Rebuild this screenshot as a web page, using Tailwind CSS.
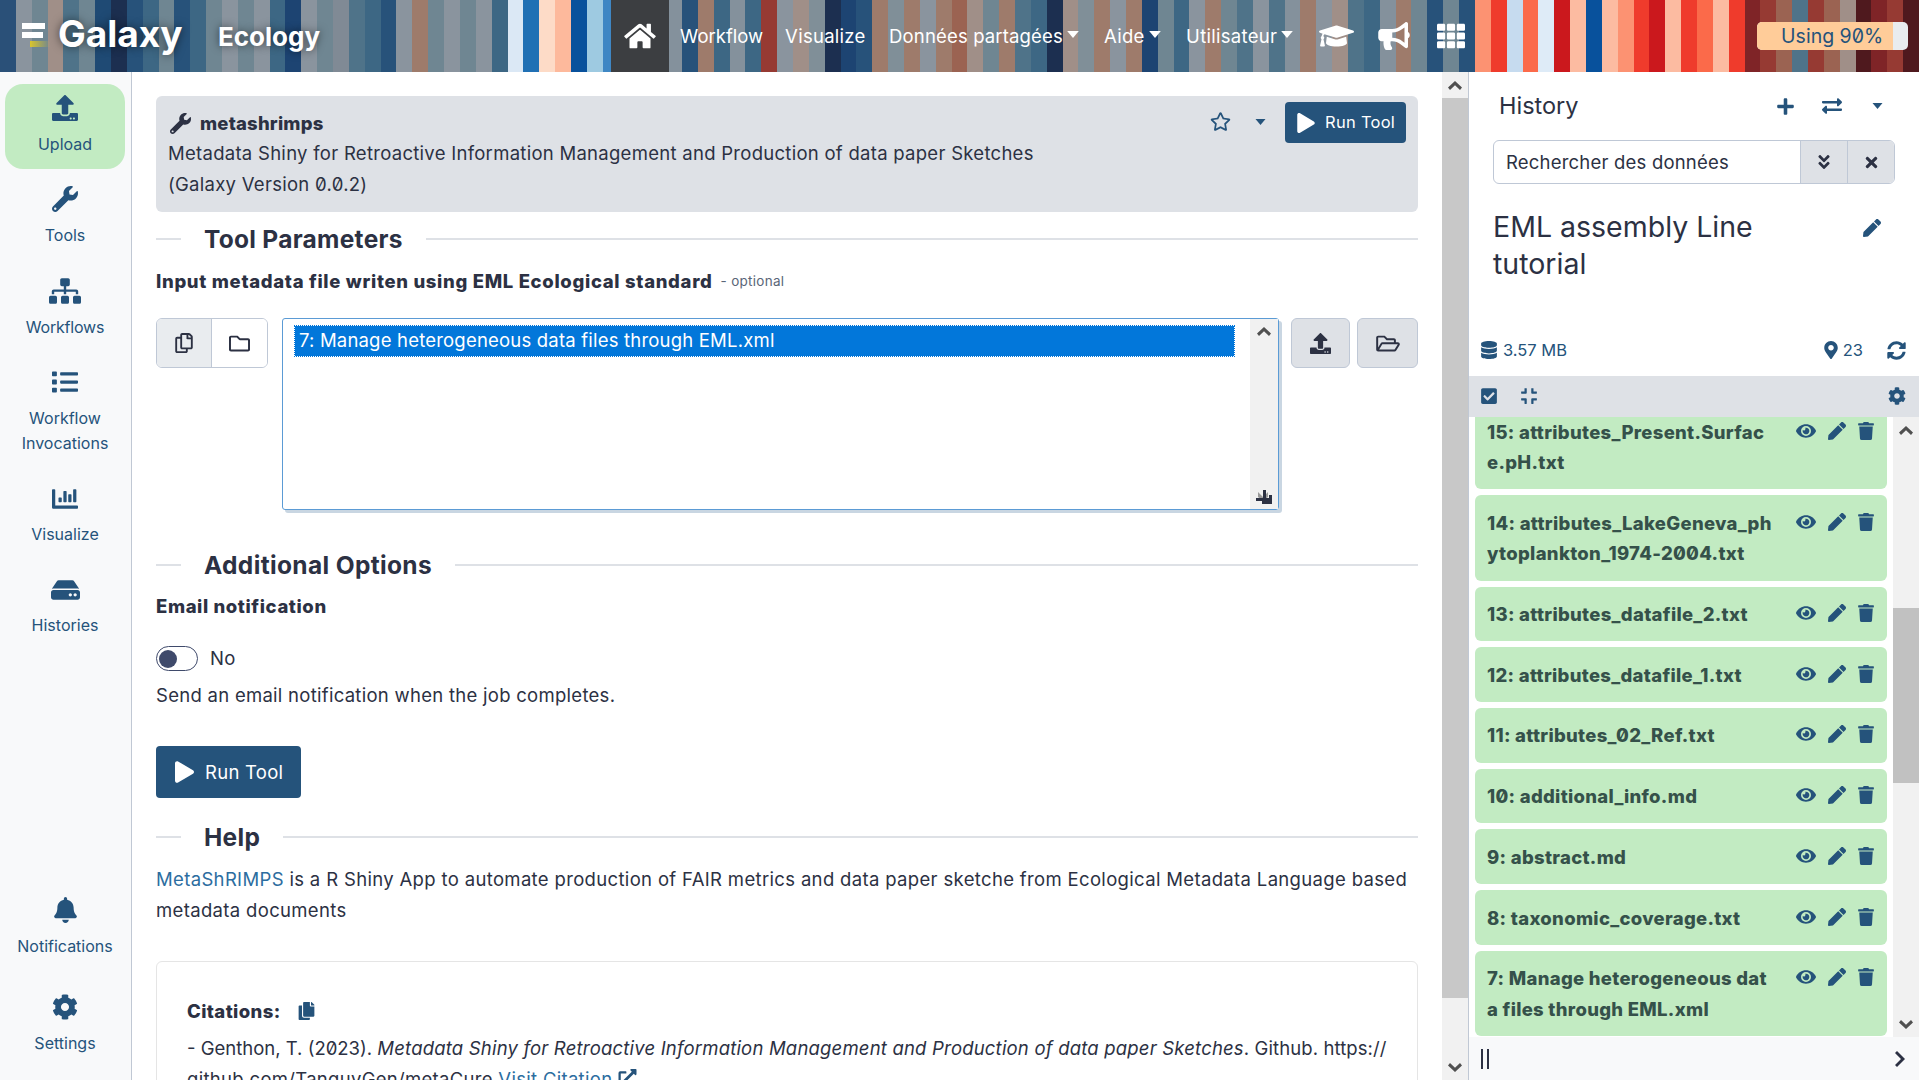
<!DOCTYPE html>
<html lang="fr">
<head>
  <meta charset="UTF-8" />
  <title>Galaxy Ecology</title>
  <script src="https://cdn.jsdelivr.net/npm/@tailwindcss/browser@4"></script>
</head>
<body class="overflow-hidden bg-white text-[#2c3143] font-[family-name:Inter,sans-serif] slashed-zero text-[18.5px] tracking-[.28px] leading-[30.6px]">

  <!-- icon sprites -->
  <svg class="hidden" xmlns="http://www.w3.org/2000/svg">
    <symbol id="i-upload" viewBox="0 0 512 512"><path d="M296 384h-80c-13.3 0-24-10.7-24-24V192h-87.7c-17.8 0-26.7-21.5-14.1-34.1L242.3 5.7c7.5-7.5 19.8-7.5 27.3 0l152.2 152.2c12.6 12.6 3.7 34.1-14.1 34.1H320v168c0 13.3-10.7 24-24 24zm216-8v112c0 13.3-10.7 24-24 24H24c-13.3 0-24-10.7-24-24V376c0-13.3 10.7-24 24-24h136v8c0 30.9 25.1 56 56 56h80c30.9 0 56-25.1 56-56v-8h136c13.3 0 24 10.7 24 24zm-124 88c0-11-9-20-20-20s-20 9-20 20 9 20 20 20 20-9 20-20zm64 0c0-11-9-20-20-20s-20 9-20 20 9 20 20 20 20-9 20-20z"/></symbol>
    <symbol id="i-wrench" viewBox="0 0 512 512"><path d="M507.73 109.1c-2.24-9.03-13.54-12.09-20.12-5.51l-74.36 74.36-67.88-11.31-11.31-67.88 74.36-74.36c6.62-6.62 3.43-17.9-5.66-20.16-47.38-11.74-99.55.91-136.58 37.93-39.64 39.64-50.55 97.1-34.05 147.2L18.74 402.76c-24.99 24.99-24.99 65.51 0 90.5 24.99 24.99 65.51 24.99 90.5 0l213.21-213.21c50.12 16.71 107.47 5.68 147.37-34.22 37.07-37.07 49.7-89.32 37.91-136.73zM64 472c-13.25 0-24-10.75-24-24 0-13.26 10.75-24 24-24s24 10.74 24 24c0 13.25-10.75 24-24 24z"/></symbol>
    <symbol id="i-sitemap" viewBox="0 0 640 512"><path d="M128 352H32c-17.67 0-32 14.33-32 32v96c0 17.67 14.33 32 32 32h96c17.67 0 32-14.33 32-32v-96c0-17.67-14.33-32-32-32zm-24-80h192v48h48v-48h192v48h48v-57.59c0-21.17-17.23-38.41-38.41-38.41H344v-64h40c17.67 0 32-14.33 32-32V32c0-17.67-14.33-32-32-32H256c-17.67 0-32 14.33-32 32v96c0 17.67 14.33 32 32 32h40v64H94.41C73.23 224 56 241.23 56 262.41V320h48v-48zm264 80h-96c-17.67 0-32 14.33-32 32v96c0 17.67 14.33 32 32 32h96c17.67 0 32-14.33 32-32v-96c0-17.67-14.33-32-32-32zm240 0h-96c-17.67 0-32 14.33-32 32v96c0 17.67 14.33 32 32 32h96c17.67 0 32-14.33 32-32v-96c0-17.67-14.33-32-32-32z"/></symbol>
    <symbol id="i-list" viewBox="0 0 512 512"><path d="M80 368H16a16 16 0 0 0-16 16v64a16 16 0 0 0 16 16h64a16 16 0 0 0 16-16v-64a16 16 0 0 0-16-16zm0-320H16A16 16 0 0 0 0 64v64a16 16 0 0 0 16 16h64a16 16 0 0 0 16-16V64a16 16 0 0 0-16-16zm0 160H16a16 16 0 0 0-16 16v64a16 16 0 0 0 16 16h64a16 16 0 0 0 16-16v-64a16 16 0 0 0-16-16zm416 176H176a16 16 0 0 0-16 16v32a16 16 0 0 0 16 16h320a16 16 0 0 0 16-16v-32a16 16 0 0 0-16-16zm0-320H176a16 16 0 0 0-16 16v32a16 16 0 0 0 16 16h320a16 16 0 0 0 16-16V80a16 16 0 0 0-16-16zm0 160H176a16 16 0 0 0-16 16v32a16 16 0 0 0 16 16h320a16 16 0 0 0 16-16v-32a16 16 0 0 0-16-16z"/></symbol>
    <symbol id="i-chart" viewBox="0 0 512 512"><path d="M332.8 320h38.4c6.4 0 12.8-6.4 12.8-12.8V172.8c0-6.4-6.4-12.8-12.8-12.8h-38.4c-6.4 0-12.8 6.4-12.8 12.8v134.4c0 6.4 6.4 12.8 12.8 12.8zm96 0h38.4c6.4 0 12.8-6.4 12.8-12.8V76.8c0-6.4-6.4-12.8-12.8-12.8h-38.4c-6.4 0-12.8 6.4-12.8 12.8v230.4c0 6.4 6.4 12.8 12.8 12.8zm-288 0h38.4c6.4 0 12.8-6.4 12.8-12.8v-70.4c0-6.4-6.4-12.8-12.8-12.8h-38.4c-6.4 0-12.8 6.4-12.8 12.8v70.4c0 6.4 6.4 12.8 12.8 12.8zm96 0h38.4c6.4 0 12.8-6.4 12.8-12.8V108.8c0-6.4-6.4-12.8-12.8-12.8h-38.4c-6.4 0-12.8 6.4-12.8 12.8v198.4c0 6.4 6.4 12.8 12.8 12.8zM496 384H64V80c0-8.84-7.16-16-16-16H16C7.16 64 0 71.16 0 80v336c0 17.67 14.33 32 32 32h464c8.84 0 16-7.16 16-16v-32c0-8.84-7.16-16-16-16z"/></symbol>
    <symbol id="i-hdd" viewBox="0 0 576 512"><path d="M576 304v96c0 26.51-21.49 48-48 48H48c-26.51 0-48-21.49-48-48v-96c0-26.51 21.49-48 48-48h480c26.51 0 48 21.49 48 48zm-48-80a79.557 79.557 0 0 1 30.777 6.165L462.25 85.374A48.003 48.003 0 0 0 422.311 64H153.689a48 48 0 0 0-39.938 21.374L17.223 230.165A79.557 79.557 0 0 1 48 224h480zm-48 96c-17.673 0-32 14.327-32 32s14.327 32 32 32 32-14.327 32-32-14.327-32-32-32zm-96 0c-17.673 0-32 14.327-32 32s14.327 32 32 32 32-14.327 32-32-14.327-32-32-32z"/></symbol>
    <symbol id="i-bell" viewBox="0 0 448 512"><path d="M224 512c35.32 0 63.97-28.65 63.97-64H160.03c0 35.35 28.65 64 63.97 64zm215.39-149.71c-19.32-20.76-55.47-51.99-55.47-154.29 0-77.7-54.48-139.9-127.94-155.16V32c0-17.67-14.32-32-31.98-32s-31.98 14.33-31.98 32v20.84C118.56 68.1 64.08 130.3 64.08 208c0 102.3-36.15 133.53-55.47 154.29-6 6.45-8.66 14.16-8.61 21.71.11 16.4 12.98 32 32.1 32h383.8c19.12 0 32-15.6 32.1-32 .05-7.55-2.61-15.27-8.61-21.71z"/></symbol>
    <symbol id="i-cog" viewBox="0 0 512 512"><path d="M487.4 315.7l-42.6-24.6c4.3-23.2 4.3-47 0-70.2l42.6-24.6c4.9-2.8 7.1-8.6 5.5-14-11.1-35.6-30-67.8-54.7-94.6-3.8-4.1-10-5.1-14.8-2.3L380.8 110c-17.9-15.4-38.5-27.3-60.8-35.1V25.8c0-5.6-3.9-10.5-9.4-11.7-36.7-8.2-74.3-7.8-109.2 0-5.5 1.2-9.4 6.1-9.4 11.7V75c-22.2 7.9-42.8 19.8-60.8 35.1L88.7 85.5c-4.9-2.8-11-1.9-14.8 2.3-24.7 26.7-43.6 58.9-54.7 94.6-1.7 5.4.6 11.2 5.5 14L67.3 221c-4.3 23.2-4.3 47 0 70.2l-42.6 24.6c-4.9 2.8-7.1 8.6-5.5 14 11.1 35.6 30 67.8 54.7 94.6 3.8 4.1 10 5.1 14.8 2.3l42.6-24.6c17.9 15.4 38.5 27.3 60.8 35.1v49.2c0 5.6 3.9 10.5 9.4 11.7 36.7 8.2 74.3 7.8 109.2 0 5.5-1.2 9.4-6.1 9.4-11.7v-49.2c22.2-7.9 42.8-19.8 60.8-35.1l42.6 24.6c4.9 2.8 11 1.9 14.8-2.3 24.7-26.7 43.6-58.9 54.7-94.6 1.5-5.5-.7-11.3-5.6-14.1zM256 336c-44.1 0-80-35.9-80-80s35.9-80 80-80 80 35.9 80 80-35.9 80-80 80z"/></symbol>
    <symbol id="i-home" viewBox="0 0 576 512"><path d="M280.37 148.26L96 300.11V464a16 16 0 0 0 16 16l112.06-.29a16 16 0 0 0 15.92-16V368a16 16 0 0 1 16-16h64a16 16 0 0 1 16 16v95.64a16 16 0 0 0 16 16.05L464 480a16 16 0 0 0 16-16V300L295.67 148.26a12.19 12.19 0 0 0-15.3 0zM571.6 251.47L488 182.56V44.05a12 12 0 0 0-12-12h-56a12 12 0 0 0-12 12v72.61L318.47 43a48 48 0 0 0-61 0L4.34 251.47a12 12 0 0 0-1.6 16.9l25.5 31A12 12 0 0 0 45.15 301l235.22-193.74a12.19 12.19 0 0 1 15.3 0L530.9 301a12 12 0 0 0 16.9-1.6l25.5-31a12 12 0 0 0-1.7-16.93z"/></symbol>
    <symbol id="i-cap" viewBox="0 0 640 512"><path d="M622.34 153.2L343.4 67.5c-15.2-4.67-31.6-4.67-46.79 0L17.66 153.2c-23.54 7.23-23.54 38.36 0 45.59l48.63 14.94c-10.67 13.19-17.23 29.28-17.88 46.9C38.78 266.15 32 276.11 32 288c0 10.78 5.68 19.85 13.86 25.65L20.33 428.53C18.11 438.52 25.71 448 35.94 448h56.11c10.24 0 17.84-9.48 15.62-19.47L82.14 313.65C90.32 307.85 96 298.78 96 288c0-11.57-6.47-21.25-15.66-26.87.76-15.02 8.44-28.3 20.69-36.72L296.6 284.5c9.06 2.78 26.44 6.25 46.79 0l278.95-85.7c23.55-7.24 23.55-38.36 0-45.6zM352.79 315.09c-28.53 8.76-52.84 3.92-65.59 0l-145.02-44.55L128 384c0 35.35 85.96 64 192 64s192-28.65 192-64l-14.18-113.47-145.03 44.56z"/></symbol>
    <symbol id="i-bullhorn" viewBox="0 0 576 512"><path d="M576 240c0-23.63-12.95-44.04-32-55.12V32.01C544 23.26 537.02 0 512 0c-7.12 0-14.19 2.38-19.98 7.02l-85.03 68.03C364.28 109.19 310.66 128 256 128H64c-35.35 0-64 28.65-64 64v96c0 35.35 28.65 64 64 64h33.7c-1.39 10.48-2.18 21.14-2.18 32 0 39.77 9.26 77.35 25.56 110.94 5.19 10.69 16.52 17.06 28.4 17.06h74.28c26.05 0 41.69-29.84 25.9-50.56-16.4-21.52-26.15-48.36-26.15-77.44 0-11.11 1.62-21.79 4.41-32H256c54.66 0 108.28 18.81 150.98 52.95l85.03 68.03a32.023 32.023 0 0 0 19.98 7.02c24.92 0 32-22.78 32-32V295.13C563.05 284.04 576 263.63 576 240zm-96 141.42l-33.05-26.44C392.95 311.78 325.12 288 256 288v-96c69.12 0 136.95-23.78 190.95-66.98L480 98.58v282.84z"/></symbol>
    <symbol id="i-th" viewBox="0 0 512 512"><path d="M149.333 56v80c0 13.255-10.745 24-24 24H24c-13.255 0-24-10.745-24-24V56c0-13.255 10.745-24 24-24h101.333c13.255 0 24 10.745 24 24zm181.334 240v-80c0-13.255-10.745-24-24-24H205.333c-13.255 0-24 10.745-24 24v80c0 13.255 10.745 24 24 24h101.333c13.256 0 24.001-10.745 24.001-24zm32-240v80c0 13.255 10.745 24 24 24H488c13.255 0 24-10.745 24-24V56c0-13.255-10.745-24-24-24H386.667c-13.255 0-24 10.745-24 24zm-32 80V56c0-13.255-10.745-24-24-24H205.333c-13.255 0-24 10.745-24 24v80c0 13.255 10.745 24 24 24h101.333c13.256 0 24.001-10.745 24.001-24zm-205.334 56H24c-13.255 0-24 10.745-24 24v80c0 13.255 10.745 24 24 24h101.333c13.255 0 24-10.745 24-24v-80c0-13.255-10.745-24-24-24zM0 376v80c0 13.255 10.745 24 24 24h101.333c13.255 0 24-10.745 24-24v-80c0-13.255-10.745-24-24-24H24c-13.255 0-24 10.745-24 24zm386.667-56H488c13.255 0 24-10.745 24-24v-80c0-13.255-10.745-24-24-24H386.667c-13.255 0-24 10.745-24 24v80c0 13.255 10.745 24 24 24zm0 160H488c13.255 0 24-10.745 24-24v-80c0-13.255-10.745-24-24-24H386.667c-13.255 0-24 10.745-24 24v80c0 13.255 10.745 24 24 24zM181.333 376v80c0 13.255 10.745 24 24 24h101.333c13.255 0 24-10.745 24-24v-80c0-13.255-10.745-24-24-24H205.333c-13.255 0-24 10.745-24 24z"/></symbol>
    <symbol id="i-star" viewBox="0 0 576 512"><path d="M528.1 171.5L382 150.2 316.7 17.8c-11.7-23.6-45.6-23.9-57.4 0L194 150.2 47.9 171.5c-26.2 3.8-36.7 36.1-17.7 54.6l105.7 103-25 145.5c-4.5 26.3 23.2 46 46.4 33.7L288 439.6l130.7 68.7c23.2 12.2 50.9-7.4 46.4-33.7l-25-145.5 105.7-103c19-18.5 8.5-50.8-17.7-54.6zM388.6 312.3l23.7 138.4L288 385.4l-124.3 65.3 23.7-138.4-100.6-98 139-20.2 62.2-126 62.2 126 139 20.2-100.6 98z"/></symbol>
    <symbol id="i-play" viewBox="0 0 448 512"><path d="M424.4 214.7L72.4 6.6C43.8-10.3 0 6.1 0 47.9V464c0 37.5 40.7 60.1 72.4 41.3l352-208c31.4-18.5 31.5-64.1 0-82.6z"/></symbol>
    <symbol id="i-plus" viewBox="0 0 448 512"><path d="M416 208H272V64c0-17.67-14.33-32-32-32h-32c-17.67 0-32 14.33-32 32v144H32c-17.67 0-32 14.33-32 32v32c0 17.67 14.33 32 32 32h144v144c0 17.67 14.33 32 32 32h32c17.67 0 32-14.33 32-32V304h144c17.67 0 32-14.33 32-32v-32c0-17.67-14.33-32-32-32z"/></symbol>
    <symbol id="i-exchange" viewBox="0 0 512 512"><path d="M0 168v-16c0-13.255 10.745-24 24-24h360V80c0-21.367 25.899-32.042 40.971-16.971l80 80c9.372 9.373 9.372 24.569 0 33.941l-80 80C409.956 271.982 384 261.456 384 240v-48H24c-13.255 0-24-10.745-24-24zm488 152H128v-48c0-21.314-25.862-32.08-40.971-16.971l-80 80c-9.372 9.373-9.372 24.569 0 33.941l80 80C102.057 463.997 128 453.437 128 432v-48h360c13.255 0 24-10.745 24-24v-16c0-13.255-10.745-24-24-24z"/></symbol>
    <symbol id="i-dbl-down" viewBox="0 0 320 512"><path d="M143 256.3L7 120.3c-9.4-9.4-9.4-24.6 0-33.9l22.6-22.6c9.4-9.4 24.6-9.4 33.9 0l96.4 96.4 96.4-96.4c9.4-9.4 24.6-9.4 33.9 0L313 86.3c9.4 9.4 9.4 24.6 0 33.9l-136 136c-9.4 9.5-24.6 9.5-34 .1zm34 192l136-136c9.4-9.4 9.4-24.6 0-33.9l-22.6-22.6c-9.4-9.4-24.6-9.4-33.9 0L160 352.1l-96.4-96.4c-9.4-9.4-24.6-9.4-33.9 0L7 278.3c-9.4 9.4-9.4 24.6 0 33.9l136 136c9.4 9.5 24.6 9.5 34 .1z"/></symbol>
    <symbol id="i-times" viewBox="0 0 352 512"><path d="M242.72 256l100.07-100.07c12.28-12.28 12.28-32.19 0-44.48l-22.24-22.24c-12.28-12.28-32.19-12.28-44.48 0L176 189.28 75.93 89.21c-12.28-12.28-32.19-12.28-44.48 0L9.21 111.45c-12.28 12.28-12.28 32.19 0 44.48L109.28 256 9.21 356.07c-12.28 12.28-12.28 32.19 0 44.48l22.24 22.24c12.28 12.28 32.2 12.28 44.48 0L176 322.72l100.07 100.07c12.28 12.28 32.2 12.28 44.48 0l22.24-22.24c12.28-12.28 12.28-32.19 0-44.48L242.72 256z"/></symbol>
    <symbol id="i-pen" viewBox="0 0 512 512"><path d="M290.74 93.24l128.02 128.02-277.99 277.99-114.14 12.6C11.35 513.54-1.56 500.62.14 485.34l12.7-114.22 277.9-277.88zm207.2-19.06l-60.11-60.11c-18.75-18.75-49.16-18.75-67.91 0l-56.55 56.55 128.02 128.02 56.55-56.55c18.75-18.76 18.75-49.16 0-67.91z"/></symbol>
    <symbol id="i-database" viewBox="0 0 448 512"><path d="M448 73.143v45.714C448 159.143 347.667 192 224 192S0 159.143 0 118.857V73.143C0 32.857 100.333 0 224 0s224 32.857 224 73.143zM448 176v102.857C448 319.143 347.667 352 224 352S0 319.143 0 278.857V176c48.125 33.143 136.208 48.572 224 48.572S399.874 209.143 448 176zm0 160v102.857C448 479.143 347.667 512 224 512S0 479.143 0 438.857V336c48.125 33.143 136.208 48.572 224 48.572S399.874 369.143 448 336z"/></symbol>
    <symbol id="i-marker" viewBox="0 0 384 512"><path d="M172.268 501.67C26.97 291.031 0 269.413 0 192 0 85.961 85.961 0 192 0s192 85.961 192 192c0 77.413-26.97 99.031-172.268 309.67-9.535 13.774-29.93 13.773-39.464 0zM192 272c44.183 0 80-35.817 80-80s-35.817-80-80-80-80 35.817-80 80 35.817 80 80 80z"/></symbol>
    <symbol id="i-sync" viewBox="0 0 512 512"><path d="M370.72 133.28C339.458 104.008 298.888 87.962 255.848 88c-77.458.068-144.328 53.178-162.791 126.85-1.344 5.363-6.122 9.15-11.651 9.15H24.103c-7.498 0-13.194-6.807-11.807-14.176C33.933 94.924 134.813 8 256 8c66.448 0 126.791 26.136 171.315 68.685L463.03 40.97C478.149 25.851 504 36.559 504 57.941V192c0 13.255-10.745 24-24 24H345.941c-21.382 0-32.09-25.851-16.971-40.971l41.75-41.749zM32 296h134.059c21.382 0 32.09 25.851 16.971 40.971l-41.75 41.75c31.262 29.273 71.835 45.319 114.876 45.28 77.418-.07 144.315-53.144 162.787-126.849 1.344-5.363 6.122-9.15 11.651-9.15h57.304c7.498 0 13.194 6.807 11.807 14.176C478.067 417.076 377.187 504 256 504c-66.448 0-126.791-26.136-171.315-68.685L48.97 471.03C33.851 486.149 8 475.441 8 454.059V320c0-13.255 10.745-24 24-24z"/></symbol>
    <symbol id="i-check" viewBox="0 0 448 512"><path d="M400 480H48c-26.51 0-48-21.49-48-48V80c0-26.51 21.49-48 48-48h352c26.51 0 48 21.49 48 48v352c0 26.51-21.49 48-48 48zm-204.686-98.059l184-184c6.248-6.248 6.248-16.379 0-22.627l-22.627-22.627c-6.248-6.248-16.379-6.249-22.628 0L184 302.745l-70.059-70.059c-6.248-6.248-16.379-6.248-22.628 0l-22.627 22.627c-6.248 6.248-6.248 16.379 0 22.627l104 104c6.249 6.25 16.379 6.25 22.628.001z"/></symbol>
    <symbol id="i-compress" viewBox="0 0 448 512"><path d="M436 192H312c-13.3 0-24-10.7-24-24V44c0-6.6 5.4-12 12-12h40c6.6 0 12 5.4 12 12v84h84c6.6 0 12 5.4 12 12v40c0 6.6-5.4 12-12 12zm-276-24V44c0-6.6-5.4-12-12-12h-40c-6.6 0-12 5.4-12 12v84H12c-6.6 0-12 5.4-12 12v40c0 6.6 5.4 12 12 12h124c13.3 0 24-10.7 24-24zm0 300V344c0-13.3-10.7-24-24-24H12c-6.6 0-12 5.4-12 12v40c0 6.6 5.4 12 12 12h84v84c0 6.6 5.4 12 12 12h40c6.6 0 12-5.4 12-12zm192 0v-84h84c6.6 0 12-5.4 12-12v-40c0-6.6-5.4-12-12-12H312c-13.3 0-24 10.7-24 24v124c0 6.6 5.4 12 12 12h40c6.6 0 12-5.4 12-12z"/></symbol>
    <symbol id="i-eye" viewBox="0 0 576 512"><path d="M572.52 241.4C518.29 135.59 410.93 64 288 64S57.68 135.64 3.48 241.41a32.35 32.35 0 0 0 0 29.19C57.71 376.41 165.07 448 288 448s230.32-71.64 284.52-177.41a32.35 32.35 0 0 0 0-29.19zM288 400a144 144 0 1 1 144-144 143.93 143.93 0 0 1-144 144zm0-240a95.31 95.31 0 0 0-25.31 3.79 47.85 47.85 0 0 1-66.9 66.9A95.78 95.78 0 1 0 288 160z"/></symbol>
    <symbol id="i-trash" viewBox="0 0 448 512"><path d="M432 32H312l-9.4-18.7A24 24 0 0 0 281.1 0H166.8a23.72 23.72 0 0 0-21.4 13.3L136 32H16A16 16 0 0 0 0 48v32a16 16 0 0 0 16 16h416a16 16 0 0 0 16-16V48a16 16 0 0 0-16-16zM53.2 467a48 48 0 0 0 47.9 45h245.8a48 48 0 0 0 47.9-45L416 128H32z"/></symbol>
    <symbol id="i-copy-o" viewBox="0 0 448 512"><path d="M433.941 65.941l-51.882-51.882A48 48 0 0 0 348.118 0H176c-26.51 0-48 21.49-48 48v48H48c-26.51 0-48 21.49-48 48v320c0 26.51 21.49 48 48 48h224c26.51 0 48-21.49 48-48v-48h80c26.51 0 48-21.49 48-48V99.882a48 48 0 0 0-14.059-33.941zM266 464H54a6 6 0 0 1-6-6V150a6 6 0 0 1 6-6h74v224c0 26.51 21.49 48 48 48h96v42a6 6 0 0 1-6 6zm128-96H182a6 6 0 0 1-6-6V54a6 6 0 0 1 6-6h106v88c0 13.255 10.745 24 24 24h88v202a6 6 0 0 1-6 6zm6-256h-64V48h9.632c1.591 0 3.117.632 4.243 1.757l48.368 48.368a6 6 0 0 1 1.757 4.243V112z"/></symbol>
    <symbol id="i-copy" viewBox="0 0 448 512"><path d="M320 448v40c0 13.255-10.745 24-24 24H24c-13.255 0-24-10.745-24-24V120c0-13.255 10.745-24 24-24h72v296c0 30.879 25.121 56 56 56h168zm0-344V0H152c-13.255 0-24 10.745-24 24v368c0 13.255 10.745 24 24 24h272c13.255 0 24-10.745 24-24V128H344c-13.2 0-24-10.8-24-24zm120.971-31.029L375.029 7.029A24 24 0 0 0 358.059 0H352v96h96v-6.059a24 24 0 0 0-7.029-16.97z"/></symbol>
    <symbol id="i-folder" viewBox="0 0 512 512"><path d="M464 128H272l-54.63-54.63c-6-6-14.14-9.37-22.63-9.37H48C21.49 64 0 85.49 0 112v288c0 26.51 21.49 48 48 48h416c26.51 0 48-21.49 48-48V176c0-26.51-21.49-48-48-48zm0 272H48V112h140.12l54.63 54.63c6 6 14.14 9.37 22.63 9.37H464v224z"/></symbol>
    <symbol id="i-folder-open" viewBox="0 0 576 512"><path d="M527.9 224H480v-48c0-26.5-21.5-48-48-48H272l-64-64H48C21.5 64 0 85.5 0 112v288c0 26.5 21.5 48 48 48h400c16.5 0 31.9-8.5 40.7-22.6l79.9-128c20-31.9-3-73.4-40.7-73.4zM48 118c0-3.3 2.7-6 6-6h134.1l64 64H426c3.3 0 6 2.7 6 6v42H152c-16.8 0-32.4 8.8-41.1 23.2L48 351.4zm400 282H72l77.2-128H528z"/></symbol>
    <symbol id="i-ext" viewBox="0 0 512 512"><path d="M432,320H400a16,16,0,0,0-16,16V448H64V128H208a16,16,0,0,0,16-16V80a16,16,0,0,0-16-16H48A48,48,0,0,0,0,112V464a48,48,0,0,0,48,48H400a48,48,0,0,0,48-48V336A16,16,0,0,0,432,320ZM488,0h-128c-21.37,0-32.05,25.91-17,41l35.73,35.73L135,320.37a24,24,0,0,0,0,34L157.67,377a24,24,0,0,0,34,0L435.28,133.32,471,169c15,15,41,4.5,41-17V24A24,24,0,0,0,488,0Z"/></symbol>
    <symbol id="i-caret" viewBox="0 0 10 6"><path d="M0 0h10L5 6z"/></symbol>
    <symbol id="i-up" viewBox="0 0 14 9"><path d="M7 0l7 6.5L12 9 7 4.2 2 9 0 6.5z"/></symbol>
    <symbol id="i-down" viewBox="0 0 14 9"><path d="M7 9L0 2.5 2 0l5 4.8L12 0l2 2.5z"/></symbol>
    <symbol id="i-right" viewBox="0 0 10 16"><path d="M2 0l8 8-8 8-2-2 6-6-6-6z"/></symbol>
  </svg>

  <div class="w-[1919px] h-[1080px] flex flex-col overflow-hidden">

    <!-- top bar -->
    <header class="relative h-[72px] shrink-0 text-white">
      <div id="stripes" class="absolute inset-0 flex"></div>
      <div class="relative h-full flex items-center">
        <div class="ml-[22px] w-[28px] h-[24px] flex flex-col gap-[3px] shrink-0 -mt-[2px]">
          <div class="w-[23px] h-[6px] bg-white"></div>
          <div class="w-[21px] h-[6px] bg-white"></div>
          <div class="ml-[8px] w-[20px] h-[6px] bg-gradient-to-r from-[#d8c42c] to-transparent"></div>
        </div>
        <span class="ml-[8px] w-[160px] text-[37px] tracking-normal font-bold leading-none -mt-[6px] [text-shadow:0_0_10px_rgba(0,0,0,.6)]">Galaxy</span>
        <span class="text-[26px] tracking-normal font-bold leading-none mt-[1px] [text-shadow:0_0_8px_rgba(0,0,0,.6)]">Ecology</span>
        <a class="ml-[291px] w-[58px] self-stretch bg-[#3c3e41] flex items-center justify-center"><svg class="w-[32px] h-[28px] fill-white"><use href="#i-home"/></svg></a>
        <a class="ml-[11px] w-[105px] tracking-normal">Workflow</a>
        <a class="w-[104px]">Visualize</a>
        <a class="w-[215px] flex items-center gap-[4px] tracking-[.15px]">Données partagées<svg class="w-[12px] h-[7px] fill-white -mt-[4px]"><use href="#i-caret"/></svg></a>
        <a class="w-[82px] flex items-center gap-[4px]">Aide<svg class="w-[12px] h-[7px] fill-white -mt-[4px]"><use href="#i-caret"/></svg></a>
        <a class="w-[124px] flex items-center gap-[4px]">Utilisateur<svg class="w-[12px] h-[7px] fill-white -mt-[4px]"><use href="#i-caret"/></svg></a>
        <svg class="ml-[9px] w-[35px] h-[28px] fill-white"><use href="#i-cap"/></svg>
        <svg class="ml-[24px] w-[32px] h-[28px] fill-white"><use href="#i-bullhorn"/></svg>
        <svg class="ml-[27px] w-[28px] h-[28px] fill-white"><use href="#i-th"/></svg>
        <div class="ml-[292px] w-[151px] h-[28px] rounded-[5px] bg-[#e9ecef] overflow-hidden relative text-[#25537b] text-[19.5px] tracking-normal leading-[28px]">
          <div class="w-[136px] h-full bg-[#ffcc99] pl-[24px] whitespace-nowrap">Using 90%</div>
        </div>
      </div>
    </header>

    <div class="flex-1 flex min-h-0">

      <!-- activity bar -->
      <nav class="w-[132px] shrink-0 bg-[#f8f9fa] border-r border-[#c0c8d4] flex flex-col pl-[5px] pr-[6px] pt-[12px] pb-[12px] text-[#25537b] text-[16px] tracking-normal leading-[25px] text-center">
        <a class="h-[85px] mb-[6.4px] rounded-[18px] bg-[#c2ebc2] pt-[11px] flex flex-col items-center">
          <svg class="w-[26px] h-[26px] fill-[#25537b]"><use href="#i-upload"/></svg><span class="mt-[10.5px]">Upload</span>
        </a>
        <a class="h-[85px] mb-[6.4px] pt-[11px] flex flex-col items-center">
          <svg class="w-[26px] h-[26px] fill-[#25537b]"><use href="#i-wrench"/></svg><span class="mt-[10.5px]">Tools</span>
        </a>
        <a class="h-[85px] mb-[6.4px] pt-[11px] flex flex-col items-center">
          <svg class="w-[32px] h-[26px] fill-[#25537b]"><use href="#i-sitemap"/></svg><span class="mt-[11.5px] tracking-[-.2px]">Workflows</span>
        </a>
        <a class="h-[110px] mb-[6.4px] pt-[11px] flex flex-col items-center">
          <svg class="w-[26px] h-[26px] fill-[#25537b]"><use href="#i-list"/></svg><span class="mt-[11px]">Workflow<br>Invocations</span>
        </a>
        <a class="h-[85px] mb-[6.4px] pt-[11px] flex flex-col items-center">
          <svg class="w-[26px] h-[26px] fill-[#25537b]"><use href="#i-chart"/></svg><span class="mt-[10.5px]">Visualize</span>
        </a>
        <a class="h-[85px] pt-[11px] flex flex-col items-center">
          <svg class="w-[29px] h-[26px] fill-[#25537b]"><use href="#i-hdd"/></svg><span class="mt-[10.5px]">Histories</span>
        </a>
        <a class="mt-auto h-[85px] mb-[12px] pt-[11px] flex flex-col items-center">
          <svg class="w-[23px] h-[26px] fill-[#25537b]"><use href="#i-bell"/></svg><span class="mt-[10.5px]">Notifications</span>
        </a>
        <a class="h-[85px] pt-[11px] flex flex-col items-center">
          <svg class="w-[26px] h-[26px] fill-[#25537b]"><use href="#i-cog"/></svg><span class="mt-[10.5px]">Settings</span>
        </a>
      </nav>

      <!-- center panel -->
      <main class="flex-1 min-w-0 overflow-hidden px-[24px] pt-[24px]">
        <div class="h-[116px] rounded-[6px] bg-[#dee1e6] pl-[12px] pr-[12px] pt-[5px] flex">
          <div class="flex-1">
            <div class="flex items-center pt-[7px] font-extrabold tracking-[.2px] h-[37px]">
              <svg class="w-[21px] h-[21px] fill-[#2c3143] ml-[2px]"><use href="#i-wrench"/></svg><span class="ml-[9px]">metashrimps</span>
            </div>
            <div>Metadata Shiny for Retroactive Information Management and Production of data paper Sketches</div>
            <div>(Galaxy Version 0.0.2)</div>
          </div>
          <div class="flex items-start pt-[1px]">
            <svg class="mt-[10px] w-[21px] h-[19px] fill-[#25537b]"><use href="#i-star"/></svg>
            <svg class="ml-[24px] mt-[17px] w-[11px] h-[6px] fill-[#25537b]"><use href="#i-caret"/></svg>
            <button class="ml-[19px] w-[121px] h-[41px] rounded-[4px] bg-[#25537b] text-white text-[16.5px] flex items-center pl-[12px] gap-[10px]">
              <svg class="w-[18px] h-[20px] fill-white"><use href="#i-play"/></svg>Run Tool
            </button>
          </div>
        </div>

        <div class="mt-[12px] h-[30px] flex items-center gap-[23px]">
          <div class="w-[25px] h-[2px] bg-[#dee1e6]"></div>
          <h2 class="text-[24.5px] font-bold">Tool Parameters</h2>
          <div class="flex-1 h-[2px] bg-[#dee1e6]"></div>
        </div>

        <div class="mt-[12px] h-[31px] flex items-center">
          <span class="font-extrabold tracking-[.68px]">Input metadata file writen using EML Ecological standard</span>
          <span class="ml-[8px] text-[13.5px] text-[#5a6678]">- optional</span>
        </div>

        <div class="mt-[21px] h-[192px] flex">
          <div class="h-[50px] w-[112px] flex rounded-[6px] border border-[#bfc8d6] overflow-hidden">
            <div class="w-[55px] bg-[#e9ecef] border-r border-[#bfc8d6] flex items-center justify-center"><svg class="w-[18px] h-[20px] fill-[#2c3143]"><use href="#i-copy-o"/></svg></div>
            <div class="flex-1 bg-white flex items-center justify-center"><svg class="w-[21px] h-[21px] fill-[#2c3143]"><use href="#i-folder"/></svg></div>
          </div>
          <div class="ml-[14px] w-[998px] h-[192px] rounded-[3px] border border-[#5b9bd5] shadow-[3px_3px_0_#c9d6e2] flex">
            <div class="flex-1 pl-[12px] pr-[16px] pt-[7px]">
              <div class="h-[30px] bg-[#0277da] outline-dotted outline-1 outline-[#0277da] text-white pl-[4px] leading-[29px] tracking-[.2px]">7: Manage heterogeneous data files through EML.xml</div>
            </div>
            <div class="w-[28px] bg-[#f1f1f1] flex flex-col items-center justify-between pt-[8px] pb-[4px]">
              <svg class="w-[14px] h-[9px] fill-[#505050]"><use href="#i-up"/></svg>
              <svg class="w-[16px] h-[15px]" viewBox="0 0 16 15"><path d="M2 2l5 5 5-5v5l-5 4-5-4z" fill="#9a9a9a"/><path d="M7 0h3v8h3V5h3v9H6v-3H0V8h7z" fill="#2c3143"/></svg>
            </div>
          </div>
          <div class="ml-[12px] w-[59px] h-[50px] rounded-[6px] bg-[#dee1e6] border border-[#bfc8d6] flex items-center justify-center"><svg class="w-[21px] h-[21px] fill-[#2c3143]"><use href="#i-upload"/></svg></div>
          <div class="ml-[7px] w-[61px] h-[50px] rounded-[6px] bg-[#dee1e6] border border-[#bfc8d6] flex items-center justify-center"><svg class="w-[24px] h-[21px] fill-[#2c3143]"><use href="#i-folder-open"/></svg></div>
        </div>

        <div class="mt-[40px] h-[30px] flex items-center gap-[23px]">
          <div class="w-[25px] h-[2px] bg-[#dee1e6]"></div>
          <h2 class="text-[24.5px] font-bold tracking-[.35px]">Additional Options</h2>
          <div class="flex-1 h-[2px] bg-[#dee1e6]"></div>
        </div>

        <div class="mt-[11px] h-[30px] leading-[30px] font-extrabold tracking-[.6px]">Email notification</div>

        <div class="mt-[25px] h-[25px] flex items-center">
          <div class="w-[42px] h-[25px] rounded-full border-[1.5px] border-[#3f4a6b] bg-white pl-[2px] flex items-center"><div class="w-[18px] h-[18px] rounded-full bg-[#3f4a6b]"></div></div>
          <span class="ml-[12px]">No</span>
        </div>
        <div class="mt-[9px] h-[30px] leading-[30px]">Send an email notification when the job completes.</div>

        <button class="mt-[36px] w-[145px] h-[52px] rounded-[4px] bg-[#25537b] text-white flex items-center pl-[19px] gap-[11px]">
          <svg class="w-[19px] h-[22px] fill-white"><use href="#i-play"/></svg>Run Tool
        </button>

        <div class="mt-[24px] h-[30px] flex items-center gap-[23px]">
          <div class="w-[25px] h-[2px] bg-[#dee1e6]"></div>
          <h2 class="text-[24.5px] font-bold">Help</h2>
          <div class="flex-1 h-[2px] bg-[#dee1e6]"></div>
        </div>

        <p class="mt-[12px] whitespace-nowrap tracking-[.34px]"><a class="text-[#2c6da0]">MetaShRIMPS</a> is a R Shiny App to automate production of FAIR metrics and data paper sketche from Ecological Metadata Language based<br>metadata documents</p>

        <div class="mt-[36px] rounded-[6px] border border-[#e5e5e5] px-[30px] pt-[34px] h-[200px]">
          <div class="flex items-center font-extrabold tracking-[.4px] h-[30px]">Citations:<svg class="ml-[17px] w-[17px] h-[18px] fill-[#25537b]"><use href="#i-copy"/></svg></div>
          <p class="mt-[7px] whitespace-nowrap tracking-[.3px]"><span class="tracking-normal">- Genthon, T. (2023). </span><em class="tracking-[.19px]">Metadata Shiny for Retroactive Information Management and Production of data paper Sketches</em><span class="tracking-[.1px]">. Github. https://</span><br>github.com/TanguyGen/metaCure <a class="text-[#2c6da0]">Visit Citation</a> <svg class="inline w-[19px] h-[18px] fill-[#25537b] align-[-1px]"><use href="#i-ext"/></svg></p>
        </div>
      </main>

      <!-- center scrollbar -->
      <div class="w-[26px] shrink-0 bg-[#f1f1f1] flex flex-col">
        <div class="h-[26px] flex items-center justify-center"><svg class="w-[14px] h-[9px] fill-[#505050]"><use href="#i-up"/></svg></div>
        <div class="h-[900px] bg-[#c8c8c8]"></div>
        <div class="mt-auto h-[26px] flex items-center justify-center"><svg class="w-[14px] h-[9px] fill-[#505050]"><use href="#i-down"/></svg></div>
      </div>

      <!-- history panel -->
      <aside class="w-[451px] shrink-0 border-l border-[#c0c8d4] flex flex-col">
        <div class="h-[68px] shrink-0 flex items-center pl-[30px]">
          <span class="text-[23.5px] tracking-normal flex-1">History</span>
          <svg class="w-[17px] h-[19px] fill-[#25537b]"><use href="#i-plus"/></svg>
          <svg class="ml-[28px] w-[20px] h-[20px] fill-[#25537b]"><use href="#i-exchange"/></svg>
          <svg class="ml-[30px] mr-[36px] w-[11px] h-[6px] fill-[#25537b]"><use href="#i-caret"/></svg>
        </div>
        <div class="ml-[24px] w-[402px] h-[44px] shrink-0 flex rounded-[6px] border border-[#bfc8d6] overflow-hidden">
          <div class="flex-1 pl-[12px] leading-[42px] tracking-[.2px]">Rechercher des données</div>
          <div class="w-[47px] bg-[#dee1e6] border-l border-[#bfc8d6] flex items-center justify-center"><svg class="w-[14px] h-[18px] fill-[#2c3143]"><use href="#i-dbl-down"/></svg></div>
          <div class="w-[47px] bg-[#dee1e6] border-l border-[#bfc8d6] flex items-center justify-center"><svg class="w-[13px] h-[17px] fill-[#2c3143]"><use href="#i-times"/></svg></div>
        </div>
        <div class="ml-[24px] mr-[38px] mt-[24px] h-[120px] shrink-0 flex text-[28.5px] tracking-normal leading-[37px]">
          <h3 class="flex-1">EML assembly Line<br>tutorial</h3>
          <svg class="mt-[11px] w-[18px] h-[18px] fill-[#25537b]"><use href="#i-pen"/></svg>
        </div>
        <div class="h-[48px] shrink-0 flex items-center pl-[12px] pr-[13px] pb-[4px] text-[16.5px] tracking-normal text-[#25537b]">
          <svg class="w-[16px] h-[18px] fill-[#25537b]"><use href="#i-database"/></svg><span class="ml-[6px] flex-1">3.57 MB</span>
          <svg class="w-[14px] h-[18px] fill-[#25537b]"><use href="#i-marker"/></svg><span class="ml-[5px]">23</span>
          <svg class="ml-[24px] w-[19px] h-[19px] fill-[#25537b]"><use href="#i-sync"/></svg>
        </div>
        <div class="h-[41px] shrink-0 bg-[#dee1e6] flex items-center pl-[12px] pr-[13px] pb-[1px]">
          <svg class="w-[16px] h-[18px] fill-[#25537b]"><use href="#i-check"/></svg>
          <svg class="ml-[24px] w-[16px] h-[18px] fill-[#25537b]"><use href="#i-compress"/></svg>
          <svg class="ml-auto w-[18px] h-[18px] fill-[#25537b]"><use href="#i-cog"/></svg>
        </div>
        <div class="h-[620px] shrink-0 flex overflow-hidden">
          <div id="datasets" class="w-[424px] pl-[6px] pr-[6px] flex flex-col gap-[6px] -mt-[13px] font-extrabold tracking-[.3px] text-[#35514a]"></div>
          <div class="flex-1 bg-[#f1f1f1] flex flex-col relative">
            <div class="h-[26px] flex items-center justify-center"><svg class="w-[14px] h-[9px] fill-[#505050]"><use href="#i-up"/></svg></div>
            <div class="mt-[165px] h-[175px] bg-[#c1c1c1]"></div>
            <div class="mt-auto h-[26px] flex items-center justify-center"><svg class="w-[14px] h-[9px] fill-[#505050]"><use href="#i-down"/></svg></div>
          </div>
        </div>
        <div class="flex-1 bg-[#f8f9fa] flex items-center pl-[12px] pr-[14px]">
          <div class="w-[8px] h-[20px] border-x-2 border-[#2c3143]"></div>
          <svg class="ml-auto w-[10px] h-[16px] fill-[#2c3143]"><use href="#i-right"/></svg>
        </div>
      </aside>
    </div>
  </div>

  <script>
    // warming stripes behind the top bar, left to right
    const stripeColors = ['#2a5078','#8a949e','#6f8692','#a08f88','#4f7389','#6f8692','#1f4a74','#1c2f50','#27527a','#3d6784','#6f8692','#27527a','#3d6784','#6f8692','#8a949e','#6f8692','#8a949e','#3d6784','#1d4472','#8a949e','#6f8692','#808a95','#4f7389','#3d6784','#27527a','#8a949e','#9e7b6b','#6f8692','#8a949e','#6f8692','#8a949e','#3d6784','#dbe8f5','#2070b4','#fddbc7','#fdb99c','#08519c','#9ecae1','#3f87c4','#3c3e41','#3c3e41','#3c3e41','#84919c','#27527a','#9e7b6b','#3d6784','#84919c','#3d6784','#963a33','#8a949e','#a08f88','#808f98','#1c2f50','#1d4472','#27527a','#9e7b6b','#808f98','#9e7b6b','#8a949e','#9e7b6b','#9b6352','#a08f88','#6f8692','#9e7b6b','#4f7389','#3d6784','#1c2f50','#a08f88','#808f98','#9e7b6b','#8a949e','#9e7b6b','#1d4472','#6f8692','#3d6784','#8a949e','#9e7b6b','#6f8692','#4f7389','#8a949e','#4f7389','#84919c','#9e7b6b','#8a949e','#a08f88','#4f7389','#3d6784','#84919c','#9e7b6b','#6f8692','#27527a','#6f8692','#27527a','#fc9272','#ef3b2c','#c6dbef','#fb6a4a','#deebf7','#cb181d','#fcbba1','#08519c','#fcbba1','#fc9272','#ef3b2c','#cb181d','#fcbba1','#ef3b2c','#fb6a4a','#fcbba1','#ef3b2c','#7f2427','#963a33','#9b6352','#4f7389','#963a33','#9b6352','#a08f88','#4f191e','#7f2427','#963a33','#4f191e'];
    const stripes = document.getElementById('stripes');
    stripeColors.forEach(color => {
      const el = document.createElement('div');
      el.className = 'flex-1';
      el.style.background = color;
      stripes.appendChild(el);
    });

    const datasets = [
      ['15: attributes_Present.Surfac', 'e.pH.txt'],
      ['14: attributes_LakeGeneva_ph', 'ytoplankton_1974-2004.txt'],
      ['13: attributes_datafile_2.txt'],
      ['12: attributes_datafile_1.txt'],
      ['11: attributes_02_Ref.txt'],
      ['10: additional_info.md'],
      ['9: abstract.md'],
      ['8: taxonomic_coverage.txt'],
      ['7: Manage heterogeneous dat', 'a files through EML.xml'],
    ];
    const list = document.getElementById('datasets');
    datasets.forEach(lines => {
      const row = document.createElement('div');
      row.className = 'shrink-0 rounded-[6px] bg-[#c2ebc2] pl-[12px] pr-[13px] pt-[12.5px] pb-[11.6px] flex justify-between items-start';
      row.innerHTML = `<div>${lines.join('<br>')}</div>
        <div class="flex items-center gap-[12px] mt-[5px]">
          <svg class="w-[20px] h-[18px] fill-[#25537b]"><use href="#i-eye"/></svg>
          <svg class="w-[18px] h-[18px] fill-[#25537b]"><use href="#i-pen"/></svg>
          <svg class="w-[16px] h-[18px] fill-[#25537b]"><use href="#i-trash"/></svg>
        </div>`;
      list.appendChild(row);
    });
  </script>
</body>
</html>
